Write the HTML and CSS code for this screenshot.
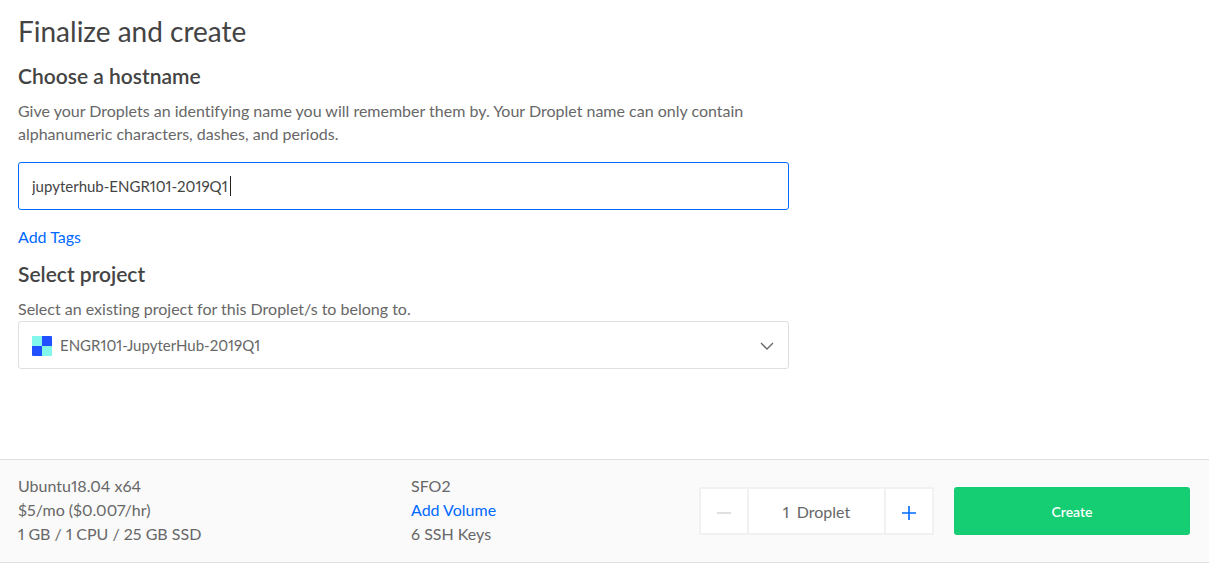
FILE: index.html
```html
<!DOCTYPE html>
<html lang="en">
<head>
<meta charset="utf-8">
<meta name="viewport" content="width=device-width, initial-scale=1">
<title>Finalize and create</title>
<link rel="stylesheet" href="styles.css">
</head>
<body>
<form class="page">
  <main class="content">
    <h1 class="title">Finalize and create</h1>
    <section class="section">
      <h2 class="heading"><label for="hostname">Choose a hostname</label></h2>
      <p class="hint">Give your Droplets an identifying name you will remember them by. Your Droplet name can only contain alphanumeric characters, dashes, and periods.</p>
      <div class="field field-spaced">
        <input class="control control-active" id="hostname" type="text" value="jupyterhub-ENGR101-2019Q1" spellcheck="false">
        <span class="caret"></span>
      </div>
      <a class="link tags" href="#tags">Add Tags</a>
    </section>
    <section class="section">
      <h2 class="heading"><label for="project">Select project</label></h2>
      <p class="hint">Select an existing project for this Droplet/s to belong to.</p>
      <div class="field">
        <select class="control control-select" id="project">
          <option>ENGR101-JupyterHub-2019Q1</option>
        </select>
        <svg class="project-icon" width="20" height="20" viewBox="0 0 20 20" aria-hidden="true">
          <path fill="#84f7ed" d="M1 0h9v10H0V1q0-1 1-1zM10 10h10v9q0 1-1 1h-9z"/>
          <path fill="#2350ff" d="M10 0h9q1 0 1 1v9H10zM0 10h10v10H1q-1 0-1-1z"/>
        </svg>
        <svg class="chevron" width="14" height="8" viewBox="0 0 14 8" aria-hidden="true">
          <path fill="none" stroke="#676767" stroke-width="1.4" d="M1 1l6 6 6-6"/>
        </svg>
      </div>
    </section>
  </main>
  <footer class="summary">
    <ul class="specs">
      <li>Ubuntu18.04 x64</li>
      <li>$5/mo ($0.007/hr)</li>
      <li>1 GB / 1 CPU / 25 GB SSD</li>
    </ul>
    <ul class="specs">
      <li>SFO2</li>
      <li><a class="link" href="#volume">Add Volume</a></li>
      <li>6 SSH Keys</li>
    </ul>
    <div class="stepper">
      <button class="step" type="button" aria-label="Fewer Droplets" disabled>
        <svg width="14" height="14" viewBox="0 0 14 14" aria-hidden="true"><path fill="#d9d9d9" d="M0 6.2h14v1.6H0z"/></svg>
      </button>
      <div class="count">
        <input class="count-input" id="count" type="text" inputmode="numeric" value="1">
        <label for="count">Droplet</label>
      </div>
      <button class="step" type="button" aria-label="More Droplets">
        <svg width="14" height="14" viewBox="0 0 14 14" aria-hidden="true"><path fill="#0069ff" d="M0 6.2h6.2V0h1.6v6.2H14v1.6H7.8V14H6.2V7.8H0z"/></svg>
      </button>
    </div>
    <button class="create" type="submit">Create</button>
  </footer>
</form>
</body>
</html>
```
FILE: styles.css
```css
* {
  box-sizing: border-box;
}

body {
  margin: 0;
  background: #fff;
  color: #676767;
  font-family: Lato, "Liberation Sans", sans-serif;
  font-size: 16px;
  font-variant-ligatures: no-common-ligatures;
  font-variant-numeric: proportional-nums;
  line-height: 24px;
}

input,
select,
button {
  font: inherit;
  color: inherit;
}

.page {
  display: flex;
  flex-direction: column;
  min-height: 100vh;
  padding-bottom: 9px;
}

.content {
  flex: 1;
  width: 66%;
  padding: 14px 9px 24px 18px;
}

.title {
  margin: 0 0 16px;
  color: #444;
  font-size: 28px;
  font-weight: 400;
  line-height: 34px;
}

.heading {
  margin: 0 0 11px;
  color: #444;
  font-size: 21px;
  font-weight: 600;
  line-height: 24px;
}

.hint {
  margin: 0;
  padding-bottom: 1px;
  line-height: 23px;
}

.field {
  position: relative;
}

.field-spaced {
  margin-top: 16px;
}

.control {
  display: block;
  width: 100%;
  height: 48px;
  padding: 0 13px;
  border: 1px solid #dfdfdf;
  border-radius: 3px;
  background: #fff;
  font-size: 15px;
  outline: 0;
}

.control-active {
  border-color: #0069ff;
  color: #444;
}

.control-select {
  appearance: none;
  padding: 0 40px 0 41px;
}

.caret {
  position: absolute;
  top: 14px;
  left: 212px;
  width: 1px;
  height: 20px;
  background: #222;
}

.project-icon {
  position: absolute;
  top: 15px;
  left: 14px;
}

.chevron {
  position: absolute;
  top: 21px;
  right: 15px;
}

.link {
  color: #0069ff;
  text-decoration: none;
}

.tags {
  display: block;
  margin: 15px 0 13px;
}

.summary {
  display: grid;
  grid-template-columns: 373fr 268fr 235fr 236fr;
  column-gap: 20px;
  align-items: center;
  padding: 14px 19px 16px 18px;
  border: solid #dfdfdf;
  border-width: 1px 0;
  background: #fafafa;
}

.specs {
  margin: 0;
  padding: 0;
  list-style: none;
}

.stepper {
  display: flex;
  height: 48px;
  margin-top: 2px;
  border: 2px solid #f1f1f1;
  background: #fff;
}

.step {
  display: flex;
  align-items: center;
  justify-content: center;
  width: 46px;
  padding: 4px 0 0;
  border: 0;
  background: none;
}

.count {
  display: flex;
  flex: 1;
  align-items: center;
  justify-content: center;
  gap: 4px;
  padding-top: 2px;
  border: solid #f1f1f1;
  border-width: 0 2px;
}

.count-input {
  width: 10px;
  padding: 0;
  border: 0;
  background: none;
  outline: 0;
}

.create {
  height: 48px;
  margin-top: 2px;
  padding: 2px 0 0;
  border: 0;
  border-radius: 3px;
  background: #15cd72;
  color: #fff;
  font-size: 14px;
  font-weight: 600;
}
```
